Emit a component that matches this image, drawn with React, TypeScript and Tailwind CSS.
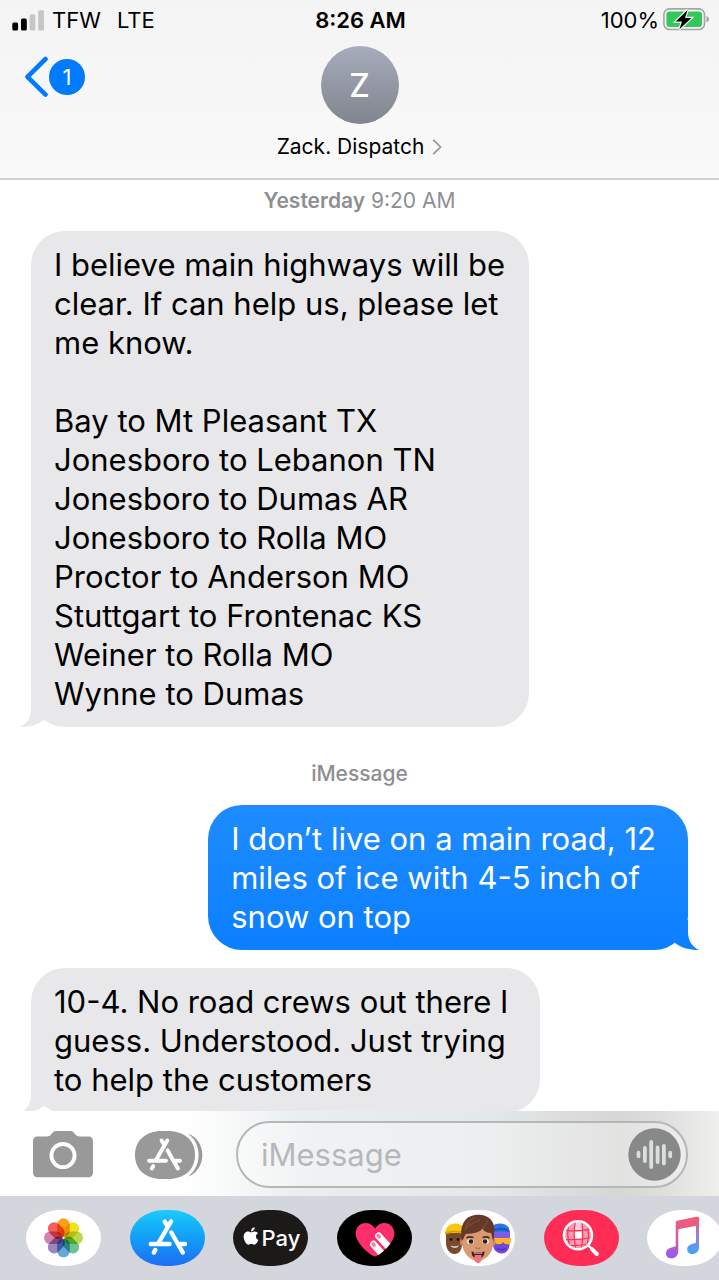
import React from 'react';
import { FaApple } from 'react-icons/fa';

interface Message {
  id: number;
  from: 'them' | 'me';
  inset: string;
  text: string;
}

const firstMessage: Message = {
  id: 1,
  from: 'them',
  inset: 'pr-6',
  text: `I believe main highways will be
clear. If can help us, please let
me know.

Bay to Mt Pleasant TX
Jonesboro to Lebanon TN
Jonesboro to Dumas AR
Jonesboro to Rolla MO
Proctor to Anderson MO
Stuttgart to Frontenac KS
Weiner to Rolla MO
Wynne to Dumas`,
};

const laterMessages: Message[] = [
  {
    id: 2,
    from: 'me',
    inset: 'pr-8',
    text: `I don’t live on a main road, 12
miles of ice with 4-5 inch of
snow on top`,
  },
  {
    id: 3,
    from: 'them',
    inset: 'pr-8',
    text: `10-4. No road crews out there I
guess. Understood. Just trying
to help the customers`,
  },
];

const Bubble: React.FC<{ message: Message }> = ({ message }) => {
  const mine = message.from === 'me';
  return (
    <div
      className={`relative w-fit shrink-0 rounded-[34px] py-[14px] pl-[23px] text-[31px] leading-[39px] whitespace-pre-line ${message.inset} ${
        mine
          ? 'self-end bg-linear-to-b from-[#1e8cff] to-[#0a7fff] text-white'
          : 'self-start bg-[#e8e8ea] text-black'
      }`}
    >
      {message.text}
      {mine ? (
        <svg className="absolute -right-[11px] bottom-0" width="24" height="30" viewBox="0 0 24 30">
          <defs>
            <linearGradient id="tail" x1="0" y1="0" x2="0" y2="1">
              <stop offset="0" stopColor="#0e82ff" />
              <stop offset="1" stopColor="#0a7fff" />
            </linearGradient>
          </defs>
          <path d="M0 0H13V12C13 20 17 27 24 30C14 30 7 28 0 23Z" fill="url(#tail)" />
        </svg>
      ) : (
        <svg className="absolute -left-[11px] bottom-0" width="24" height="30" viewBox="0 0 24 30">
          <path d="M24 0H11V12C11 20 7 27 0 30C10 30 17 28 24 23Z" fill="#e8e8ea" />
        </svg>
      )}
    </div>
  );
};

const StatusBar = () => (
  <div className="grid h-10 grid-cols-[1fr_auto_1fr] items-center pl-3 pr-[10px] text-[22px]">
    <div className="flex items-center gap-2">
      <svg width="32" height="21" viewBox="0 0 32 21">
        <rect x="0.3" y="12.5" width="5.8" height="8" rx="1.6" fill="#000" />
        <rect x="9" y="8.5" width="5.8" height="12" rx="1.6" fill="#000" />
        <rect x="17.6" y="4.2" width="5.8" height="16.3" rx="1.6" fill="#c6c6c7" />
        <rect x="26.2" y="0.3" width="5.8" height="20.2" rx="1.6" fill="#c6c6c7" />
      </svg>
      <span>TFW</span>
      <span className="ml-2">LTE</span>
    </div>
    <span className="font-semibold">8:26 AM</span>
    <div className="flex items-center justify-end gap-1">
      <span>100%</span>
      <svg width="46" height="24" viewBox="0 0 46 24">
        <rect x="0.9" y="0.9" width="40.6" height="20.6" rx="5.6" fill="none" stroke="#a6a6a7" strokeWidth="1.6" />
        <rect x="3.4" y="3.4" width="35.6" height="15.6" rx="3.2" fill="#34c759" />
        <path d="M43.4 8C45.3 8.8 46 10 46 11.2S45.3 13.6 43.4 14.4Z" fill="#a6a6a7" />
        <path
          d="M24.6 1.9L12.6 13.5H19L16.4 21.3L28.4 9.9H22Z"
          fill="#000"
          stroke="#f4f6f4"
          strokeWidth="2.4"
          paintOrder="stroke"
        />
      </svg>
    </div>
  </div>
);

const Header = () => (
  <header className="shrink-0 border-b-2 border-[#d0d0d1] bg-linear-to-b from-[#f4f4f5] to-[#f9f9fa]">
    <StatusBar />
    <div className="grid h-[138px] grid-cols-[1fr_auto_1fr] items-start">
      <button type="button" aria-label="Back, 1 unread" className="mt-4 ml-6 flex w-fit items-center gap-px">
        <svg width="24" height="42" viewBox="0 0 24 42">
          <path
            d="M21.5 3L3.5 20.8L21.5 38.6"
            fill="none"
            stroke="#007aff"
            strokeWidth="4.6"
            strokeLinecap="round"
            strokeLinejoin="round"
          />
        </svg>
        <span className="flex h-9 w-9 items-center justify-center rounded-full bg-[#007aff] text-[22px] text-white">
          1
        </span>
      </button>
      <a href="#contact" className="flex flex-col items-center pt-[6px]">
        <span className="flex h-[78px] w-[78px] items-center justify-center rounded-full bg-linear-to-b from-[#a6acba] to-[#81858f] pt-[2px] text-[32px] font-medium text-white">
          Z
        </span>
        <span className="mt-[9px] flex items-center gap-2 text-[21px] leading-7">
          Zack. Dispatch
          <svg width="10" height="16" viewBox="0 0 10 16">
            <path d="M1.2 0.8L8.6 8L1.2 15.2" fill="none" stroke="#8e97a3" strokeWidth="1.7" />
          </svg>
        </span>
      </a>
    </div>
  </header>
);

// The three crossed sticks used by both App Store icons
const StoreGlyph = () => (
  <g fill="none" stroke="#fff" strokeWidth="4.4" strokeLinecap="round">
    <path d="M20.8 34H39.5M50.5 34H55" />
    <path d="M41 11.5L28.8 32.5M25.3 40L23.8 42.5" />
    <path d="M34.7 11.5L37.5 16M41.3 22.5L52.8 42.5" />
  </g>
);

const Composer = () => (
  <div className="flex shrink-0 items-center bg-[linear-gradient(90deg,#fff_26%,#eaeeef_42%,#e4e8e9_68%,#d6d6d5_86%,#dededd_92%,#efefee)] pt-[10px] pr-[31px] pb-2 pl-[33px]">
    <button type="button" aria-label="Camera" className="shrink-0">
      <svg width="60" height="47" viewBox="0 0 60 47">
        <path
          d="M5 5.5H13.5C16 5.5 17 4.8 18.5 3L19.8 1.5C21 0.3 22 0 24 0H36.5C38.5 0 39.5 0.3 40.7 1.5L42 3C43.5 4.8 44.5 5.5 47 5.5H55C58.5 5.5 60 7.5 60 10.5V41C60 44.5 58.5 46.3 55 46.3H5C1.5 46.3 0 44.5 0 41V10.5C0 7.5 1.5 5.5 5 5.5Z"
          fill="#999"
        />
        <circle cx="30" cy="24.6" r="11.6" fill="none" stroke="#fff" strokeWidth="3.8" />
      </svg>
    </button>
    <button type="button" aria-label="Apps" className="ml-[42px] shrink-0">
      <svg width="68" height="48" viewBox="0 0 68 48">
        <path d="M27 0H33C49 0 60 9 60 24S49 48 33 48H27C11 48 0 39 0 24S11 0 27 0Z" fill="#999" />
        <path d="M53 2.5C62 6 67.3 14 67.3 24S62 42 53 45.8C60 40 63.6 33 63.6 24S60 8 53 2.5Z" fill="#999" />
        <g transform="translate(-4.6 -0.8) scale(0.9)">
          <StoreGlyph />
        </g>
      </svg>
    </button>
    <div className="ml-[33px] flex min-w-0 flex-1 items-center rounded-full border-2 border-[#b4b7b8] bg-white/30 py-[5px] pr-[5px] pl-[23px]">
      <input
        type="text"
        aria-label="Message"
        placeholder="iMessage"
        className="min-w-0 flex-1 bg-transparent text-[31px] leading-[39px] outline-none placeholder:text-[#b5b8ba]"
      />
      <button type="button" aria-label="Record audio" className="shrink-0">
        <svg width="53" height="53" viewBox="0 0 53 53">
          <circle cx="26.5" cy="26.5" r="26.2" fill="#878988" />
          <path
            d="M10.5 24.7V28.3M16.9 20V33M23.2 14V39M29.6 19.5V34M35.9 18V35.5M42.2 24.7V28.3"
            stroke="#dcdddd"
            strokeWidth="3.8"
            strokeLinecap="round"
          />
        </svg>
      </button>
    </div>
  </div>
);

const petals = ['#f9a11b', '#f2e21c', '#bdd94b', '#6cc297', '#62a8de', '#9a87c0', '#d083b2', '#f0605c'];

const PhotosIcon = () => (
  <svg width="75" height="56" viewBox="0 0 75 56" className="isolate">
    {petals.map((color, i) => (
      <rect
        key={color}
        x="31.2"
        y="8.3"
        width="12.6"
        height="18.6"
        rx="6.3"
        fill={color}
        transform={`rotate(${i * 45} 37.5 27.8)`}
        className="mix-blend-multiply"
      />
    ))}
  </svg>
);

const HeartIcon = () => (
  <svg width="75" height="56" viewBox="0 0 75 56">
    <defs>
      <clipPath id="heart">
        <path d="M38 46.5C35 46.5 18.7 34 18.7 23.5C18.7 17.5 23 13 28.5 13C32.5 13 36 15 38 18.5C40 15 43.5 13 47.5 13C53 13 57.3 17.5 57.3 23.5C57.3 34 41 46.5 38 46.5Z" />
      </clipPath>
    </defs>
    <g clipPath="url(#heart)">
      <rect width="75" height="56" fill="#ff2d6c" />
      <g stroke="#fff" strokeWidth="7" strokeLinecap="round">
        <path d="M41.6 26L54 39.5" />
        <path d="M36.5 34.3L48 47" />
      </g>
      <g stroke="#ff7da3" strokeWidth="3.6" strokeLinecap="round">
        <path d="M41.2 25.6L42.2 26.7" />
        <path d="M36.1 33.9L37.1 35" />
      </g>
    </g>
  </svg>
);

const MemojiIcon = () => (
  <svg width="75" height="56" viewBox="0 0 75 56">
    {/* left face with the yellow cap */}
    <path d="M6 23H22V34C22 40 19 44 14.5 44C9 44 6 38 6 33Z" fill="#7b4a2e" />
    <path d="M5 24.5C5 17 10 13.5 15 13.5C19 13.5 22 15 23 17V24C17 22 10 22.5 5 24.5Z" fill="#f6c50c" />
    <path d="M5 24.5C10 22 17 22 23 24V21.5C16 20 9 20.5 5 22.5Z" fill="#d9a300" />
    <circle cx="11" cy="29.5" r="1.4" fill="#1d120d" />
    <circle cx="18" cy="29.5" r="1.4" fill="#1d120d" />
    <path d="M10.5 35.5C13 36.5 16 36.5 19 35.3C18.5 38.5 11.5 39 10.5 35.5Z" fill="#d8c9bf" />
    {/* right face with the blue hat */}
    <path d="M53 24H69.5V33C69.5 39 67 43.5 61.5 43.5C57 43.5 53 40 53 34Z" fill="#7048df" />
    <path d="M52 16C56 12.5 66 12.5 69 18L70 26H52Z" fill="#2f74e6" />
    <path d="M54 19C60 16.5 65 17 69.5 20.5V22.5C65 20 60 19.5 54 21Z" fill="#1d56bd" />
    <path d="M54 22H70V28H54Z" fill="#7f5ce8" />
    <path d="M54 28H71V31C70.5 35 65 35.500 63 32C62 35 56 35 54 32Z" fill="#ffb51f" />
    <path d="M57 38.5C60 40 63 40 66 38.5" stroke="#4c2ba8" strokeWidth="1.2" fill="none" />
    {/* centre face */}
    <ellipse cx="22.5" cy="32" rx="2.5" ry="4" fill="#c98660" />
    <ellipse cx="53" cy="32" rx="2.5" ry="4" fill="#c98660" />
    <path d="M22.5 20H53V34C53 43 45 51 37.7 51S22.5 43 22.5 34Z" fill="#d99a72" />
    <path
      d="M21.5 31C19.5 16 24 6.500 35 5C47 3 54.500 10 54.500 20L53.5 31C52 29 52 25.500 51 23C47 23 44.500 21.500 42.500 19C38 23.500 30 23.500 26 24C24 26 24 29.500 21.500 31Z"
      fill="#64392a"
    />
    <path d="M35 7.500C29 10 26 14 25.500 19C29 15 33 12.500 40 10M42 19C45 16 47 13 47.500 10" stroke="#7d4c38" strokeWidth="1.3" fill="none" />
    <path d="M26.5 28C28.5 26.6 31 26.6 33.5 27.6M42.5 27.6C45 26.6 47.5 26.6 49.5 28" stroke="#4f2c20" strokeWidth="1.6" fill="none" />
    <ellipse cx="30.5" cy="31.5" rx="3.4" ry="2.6" fill="#f3ece8" />
    <ellipse cx="45.5" cy="31.5" rx="3.4" ry="2.6" fill="#f3ece8" />
    <circle cx="31" cy="31.5" r="2.3" fill="#2c2119" />
    <circle cx="45" cy="31.5" r="2.3" fill="#2c2119" />
    <path d="M35.5 37.5C37 38.8 39 38.8 40.5 37.5" stroke="#b56f4a" strokeWidth="1.4" fill="none" />
    <path d="M31.5 41.5C35 42.6 41 42.6 44.5 41.5C44.5 46 42 48.5 38 48.5S31.5 46 31.5 41.5Z" fill="#4a1717" />
    <path d="M33.500 42.3C36 43 40 43 42.500 42.3L42 43.500H34Z" fill="#fff" />
    <path d="M34.5 45H41.5V49C41.5 54.5 34.5 54.5 34.5 49Z" fill="#f0717f" />
  </svg>
);

const SearchIcon = () => (
  <svg width="75" height="56" viewBox="0 0 75 56">
    <circle cx="34" cy="25.3" r="12.8" fill="#ff9db1" />
    <path d="M30.5 21.3H37.7V28.5H30.5Z" fill="#fff" />
    <path d="M31 13C34 12.5 36 13 37.5 13.5V20H30Z" fill="#ffd0d9" />
    <path
      d="M31.3 12C29.8 20 29.8 30 31.8 38.5M24.5 16C23.3 22 23.6 29 25.5 35M38 12.5C39 20 39 30 37.3 38M44 17.5C44.8 22 44.6 29 43.3 34M21 20.3C29 21.3 38 21 47 18.8M20.5 29.5C29 30 39 29.5 47.5 27.5M25 35.5C31 36 37 35.5 44 34"
      fill="none"
      stroke="#ff2d55"
      strokeWidth="1.2"
    />
    <circle cx="34" cy="25.3" r="14" fill="none" stroke="#fff" strokeWidth="2.6" />
    <path d="M44.3 35.5L48 39" stroke="#fff" strokeWidth="2.4" />
    <path d="M48 39.2L52.8 44" stroke="#fff" strokeWidth="4" strokeLinecap="round" />
  </svg>
);

const MusicIcon = () => (
  <svg width="75" height="56" viewBox="0 0 75 56">
    <defs>
      <linearGradient id="noteTop" x1="0" y1="0" x2="0" y2="1">
        <stop offset="0" stopColor="#fb5a68" />
        <stop offset="0.45" stopColor="#d45fa8" />
        <stop offset="1" stopColor="#9458f6" />
      </linearGradient>
      <linearGradient id="noteRight" gradientUnits="userSpaceOnUse" x1="0" y1="7" x2="0" y2="44">
        <stop offset="0" stopColor="#fb5a68" />
        <stop offset="0.5" stopColor="#9d7bd8" />
        <stop offset="1" stopColor="#33a9fd" />
      </linearGradient>
    </defs>
    <path
      d="M49 15.5V32.8C47 33.8 40.2 34 40.2 39.3C40.2 42.5 42.5 44 45 44C49 44 52 41.5 52 37V8.5C52 7 51.3 6.5 50 6.7L40 9V17.3Z"
      fill="url(#noteRight)"
    />
    <path
      d="M50 6.7L31 10.5C29.3 10.8 28.7 11.5 28.7 13V36.3C26.5 37.3 19 37.5 19 43.3C19 46.5 21.3 48.3 24 48.3C28.5 48.3 31.3 45.5 31.3 41V20.5C31.3 19.7 31.7 19.3 32.5 19.1L50 15.6Z"
      fill="url(#noteTop)"
    />
  </svg>
);

const apps = [
  { name: 'Photos', bg: 'bg-white', icon: <PhotosIcon /> },
  {
    name: 'App Store',
    bg: 'bg-linear-to-b from-[#1dcbfb] to-[#1f6cf3]',
    icon: (
      <svg width="75" height="56" viewBox="0 0 75 56">
        <StoreGlyph />
      </svg>
    ),
  },
  {
    name: 'Apple Pay',
    bg: 'bg-[#1c1a19]',
    icon: (
      <span className="flex items-center justify-center gap-px text-[22px] font-medium text-white">
        <FaApple size={20} className="-mt-1" />
        Pay
      </span>
    ),
  },
  { name: 'Digital Touch', bg: 'bg-black', icon: <HeartIcon /> },
  { name: 'Memoji', bg: 'bg-white', icon: <MemojiIcon /> },
  { name: 'Images', bg: 'bg-[#ff2d55]', icon: <SearchIcon /> },
  { name: 'Music', bg: 'bg-white', icon: <MusicIcon /> },
];

const AppStrip = () => (
  <nav className="shrink-0 overflow-hidden bg-[#d3d6dc]">
    <div className="-mr-[3px] flex justify-between py-[14px] pl-[26px]">
      {apps.map((app) => (
        <button
          key={app.name}
          type="button"
          aria-label={app.name}
          className={`flex h-14 w-[75px] shrink-0 items-center justify-center overflow-hidden rounded-[34px/28px] ${app.bg}`}
        >
          {app.icon}
        </button>
      ))}
    </div>
  </nav>
);

export default function App() {
  return (
    <div className="flex h-screen flex-col overflow-hidden bg-white font-['Inter','Liberation_Sans',sans-serif] text-black">
      <Header />
      <main className="flex min-h-0 flex-1 flex-col overflow-hidden px-[31px]">
        <p className="shrink-0 pt-[7px] text-center text-[21px] leading-7 text-[#8e8e92]">
          <span className="font-semibold">Yesterday</span> 9:20 AM
        </p>
        <div className="mt-4 flex flex-col">
          <Bubble message={firstMessage} />
        </div>
        <p className="mt-[33px] shrink-0 text-center text-[21px] leading-7 font-medium text-[#8e8e92]">iMessage</p>
        <div className="mt-[17px] flex flex-col gap-[18px]">
          {laterMessages.map((message) => (
            <Bubble key={message.id} message={message} />
          ))}
        </div>
      </main>
      <Composer />
      <AppStrip />
    </div>
  );
}
